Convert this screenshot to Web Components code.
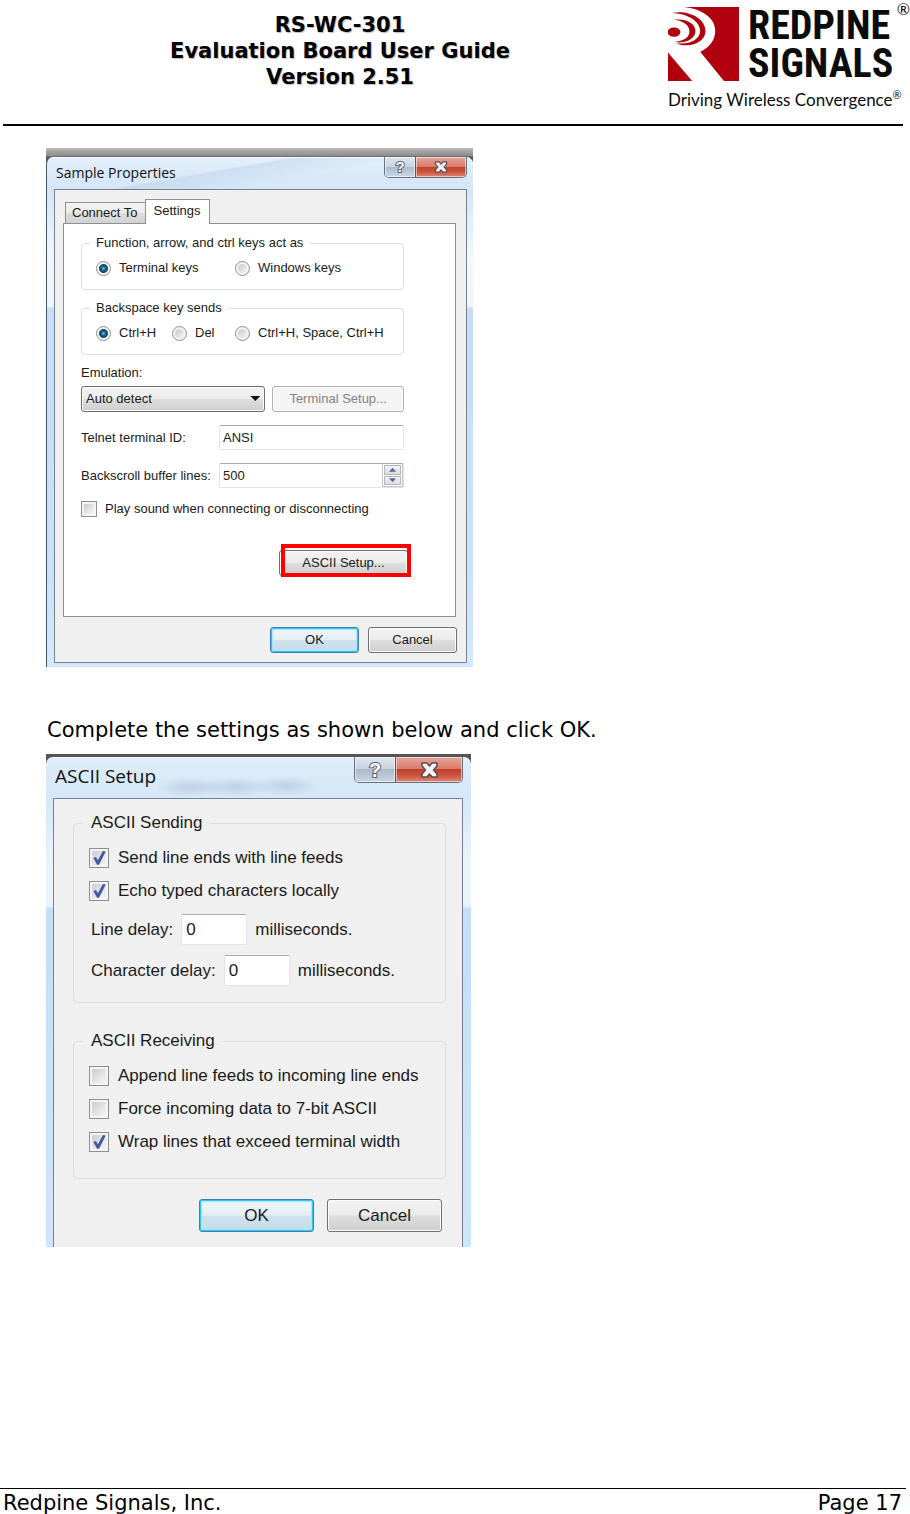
<!DOCTYPE html>
<html lang="en">
<head>
<meta charset="utf-8">
<title>RS-WC-301 Evaluation Board User Guide</title>
<style>
  body {
    margin: 0;
    background: #fff;
    color: #000;
    font-family: "DejaVu Sans", Verdana, sans-serif;
    font-size: 21px;
    line-height: 26px;
  }
  p {
    margin: 50px 0 11px;
    padding-left: 1px;
  }
  .two-up {
    display: grid;
    grid-template-columns: 7fr 5fr;
    align-items: end;
    gap: 7px;
    --button-width: 0;
  }
  .stack {
    display: grid;
    grid-template-columns: minmax(0, 1fr);
    gap: 13px;
  }
  .delays {
    display: grid;
    gap: 10px;
    padding-left: 2px;
  }
  .end {
    display: flex;
    justify-content: flex-end;
    margin: 33px -4px 0 0;
  }
</style>
</head>
<body>
<doc-page>
  <doc-header slot="header">
    RS-WC-301<br>Evaluation Board User Guide<br>Version 2.51
    <brand-logo slot="logo"></brand-logo>
  </doc-header>

  <win-dialog title-text="Sample Properties">
    <tab-panel>
      <group-box legend="Function, arrow, and ctrl keys act as">
        <radio-group name="keys" options="Terminal keys|Windows keys" style="--columns: 139px 1fr"></radio-group>
      </group-box>
      <group-box legend="Backspace key sends">
        <radio-group name="backspace" options="Ctrl+H|Del|Ctrl+H, Space, Ctrl+H" style="--columns: 76px 63px 1fr"></radio-group>
      </group-box>
      <div class="stack">
        <div class="two-up">
          <combo-box label="Emulation:" value="Auto detect"></combo-box>
          <push-button disabled>Terminal Setup...</push-button>
        </div>
        <text-field label="Telnet terminal ID:" value="ANSI"></text-field>
        <text-field label="Backscroll buffer lines:" value="500" stepper></text-field>
        <check-option>Play sound when connecting or disconnecting</check-option>
      </div>
      <div class="end">
        <red-marker><push-button style="--button-width: 129px">ASCII Setup...</push-button></red-marker>
      </div>
    </tab-panel>
    <push-button slot="actions" primary>OK</push-button>
    <push-button slot="actions">Cancel</push-button>
  </win-dialog>

  <p>Complete the settings as shown below and click OK.</p>

  <win-dialog title-text="ASCII Setup" large>
    <group-box legend="ASCII Sending">
      <div class="stack">
        <check-option checked>Send line ends with line feeds</check-option>
        <check-option checked>Echo typed characters locally</check-option>
        <div class="delays">
          <delay-field label="Line delay:" value="0"></delay-field>
          <delay-field label="Character delay:" value="0"></delay-field>
        </div>
      </div>
    </group-box>
    <group-box legend="ASCII Receiving" style="--group-bottom: 26px">
      <div class="stack">
        <check-option>Append line feeds to incoming line ends</check-option>
        <check-option>Force incoming data to 7-bit ASCII</check-option>
        <check-option checked>Wrap lines that exceed terminal width</check-option>
      </div>
    </group-box>
    <push-button slot="actions" primary>OK</push-button>
    <push-button slot="actions">Cancel</push-button>
  </win-dialog>

  <doc-footer slot="footer">Redpine Signals, Inc.<span slot="page">Page 17</span></doc-footer>
</doc-page>

<script>
class DocPage extends HTMLElement {
  constructor() {
    super();
    this.attachShadow({ mode: 'open' }).innerHTML = `
      <style>
        :host { display: flex; flex-direction: column; min-height: 100vh; }
        main { flex: 1; padding: 22px 46px; }
      </style>
      <slot name="header"></slot>
      <main><slot></slot></main>
      <slot name="footer"></slot>
    `;
  }
}

class DocHeader extends HTMLElement {
  constructor() {
    super();
    this.attachShadow({ mode: 'open' }).innerHTML = `
      <style>
        :host { display: block; margin: 0 7px 0 3px; border-bottom: 2px solid #000; }
        header { display: flex; min-height: 124px; }
        h1 {
          flex: 1;
          margin: 0;
          padding: 12px 0 0 9px;
          font-size: 21px;
          line-height: 26px;
          text-align: center;
          text-shadow: 1px 1px 1px #bbb;
        }
      </style>
      <header>
        <h1><slot></slot></h1>
        <slot name="logo"></slot>
      </header>
    `;
  }
}

class BrandLogo extends HTMLElement {
  constructor() {
    super();
    this.attachShadow({ mode: 'open' }).innerHTML = `
      <style>
        :host { display: block; position: relative; width: 235px; padding-top: 7px; color: #0c0c0c; }
        .brand { display: flex; gap: 9px; }
        svg { width: 71px; height: 74px; }
        .name {
          font-family: "Roboto Condensed", Roboto, sans-serif;
          font-weight: 700;
          font-size: 40px;
          line-height: 38px;
        }
        .name span { display: block; }
        .tagline { font-family: Lato, sans-serif; font-size: 17px; line-height: 22px; margin-top: 6px; white-space: nowrap; }
        sup { font-size: 11px; line-height: 0; }
        .mark { position: absolute; top: 0; right: -7px; font-family: Lato, sans-serif; font-size: 16px; line-height: 18px; }
      </style>
      <div class="brand">
        <svg viewBox="12 15 212 221" aria-hidden="true">
          <path fill="#b1000e" d="M12 15H224V236H12Z"/>
          <path fill="#fff" d="M11 14H24C84 10 153 34 153 86C153 116 134 137 108 149L180 237H85L11 150Z"/>
          <path fill="#b1000e" d="M24 33C70 22 124 48 124 86C124 122 76 140 36 123C72 129 108 114 108 87C108 56 68 34 24 33Z"/>
          <path fill="#b1000e" d="M30 53C62 48 94 62 94 87C94 110 64 126 32 119C56 117 76 107 76 88C76 68 56 56 30 53Z"/>
          <ellipse fill="#b1000e" cx="30" cy="90" rx="19" ry="14"/>
        </svg>
        <div class="name"><span>REDPINE</span><span>SIGNALS</span></div>
      </div>
      <div class="tagline">Driving Wireless Convergence<sup>®</sup></div>
      <span class="mark">®</span>
    `;
  }
}

class DocFooter extends HTMLElement {
  constructor() {
    super();
    this.attachShadow({ mode: 'open' }).innerHTML = `
      <style>
        :host { display: block; margin-right: 4px; border-top: 1px solid #000; }
        footer { display: flex; justify-content: space-between; padding: 4px 4px 0 3px; line-height: 21px; }
      </style>
      <footer><span><slot></slot></span><slot name="page"></slot></footer>
    `;
  }
}

class WinDialog extends HTMLElement {
  constructor() {
    super();
    this.attachShadow({ mode: 'open' });
  }

  connectedCallback() {
    this.shadowRoot.innerHTML = `
      <style>
        :host {
          --text: 13px;
          --line: 16px;
          --check: 16px;
          --check-gap: 8px;
          --field: 25px;
          --button-width: 89px;
          --button-height: 26px;
          --group-top: 9px;
          --group-side: 14px;
          --group-bottom: 13px;
          --legend-start: 6px;
          display: block;
          width: 427px;
          max-width: 100%;
          box-sizing: border-box;
          padding-top: 9px;
          background: linear-gradient(#b8b8b8, #8a8a8a 8px, #555 9px, #555 14px, transparent 14px);
          font-family: "Liberation Sans", Arial, sans-serif;
          font-size: var(--text);
          line-height: var(--line);
          color: #1a1a1a;
        }
        :host([large]) {
          --text: 17px;
          --line: 20px;
          --check: 20px;
          --check-gap: 9px;
          --field: 31px;
          --button-width: 115px;
          --button-height: 33px;
          --group-top: 15px;
          --group-side: 15px;
          --group-bottom: 16px;
          --legend-start: 8px;
          width: 425px;
          padding-top: 3px;
          background: linear-gradient(#555, #555 12px, transparent 12px);
        }
        .frame {
          padding: 0 6px 4px 7px;
          border-left: 1px solid #44576a;
          border-radius: 7px 7px 0 0;
          box-shadow: inset 0 1px #f6fbff;
          background:
            linear-gradient(170deg, transparent 40%, #b4cbe466 42%, transparent 60%) 0 0 / 100% 32px no-repeat,
            linear-gradient(#e3effb, #d3e5f7 32px, #f2f7fd 100px, #eef5fd 150px, #c5ddf7 151px, #cbe1f9 80%, #d5e8fb);
        }
        :host([large]) .frame {
          padding: 0 8px 0 7px;
          border-left: 0;
          background:
            radial-gradient(closest-side, #9fb4cc77, transparent) 110px 20px / 70px 20px no-repeat,
            radial-gradient(closest-side, #9fb4cc77, transparent) 155px 20px / 70px 20px no-repeat,
            radial-gradient(closest-side, #9fb4cc77, transparent) 205px 19px / 70px 20px no-repeat,
            linear-gradient(#e0ecf9, #d5e7f8 41px, #eaf3fc 100px, #eaf3fc 150px, #c5ddf7 151px, #cfe5fb);
        }
        .title { display: flex; align-items: flex-start; height: 32px; }
        :host([large]) .title { height: 41px; }
        h2 {
          flex: 1;
          margin: 0;
          padding-left: 2px;
          font: 400 14px/32px "Open Sans", "Noto Sans", sans-serif;
          color: #111;
        }
        :host([large]) h2 { font-size: 19px; line-height: 38px; }
        .caption {
          display: flex;
          border: 1px solid #67727f;
          border-top: 0;
          border-radius: 0 0 5px 5px;
          overflow: hidden;
        }
        button {
          display: flex;
          align-items: center;
          justify-content: center;
          box-sizing: border-box;
          width: 30px;
          height: 20px;
          margin: 0;
          padding: 0;
          border: 0;
          background: linear-gradient(#dde6f0, #c8d3e0 48%, #abb9ca 50%, #cad6e4);
          box-shadow: inset 0 0 0 1px #ffffff88;
        }
        .close {
          width: 51px;
          border-left: 1px solid #7a4a48;
          background: linear-gradient(#e5a79c, #d9796a 48%, #c0412b 50%, #cb5540 75%, #dd8a74);
        }
        :host([large]) button { width: 40px; height: 25px; }
        :host([large]) .close { width: 67px; }
        button span {
          font: 700 15px/18px "Liberation Sans", Arial, sans-serif;
          color: #fff;
          -webkit-text-stroke: 2px #5b6472;
          paint-order: stroke fill;
        }
        svg { width: 14px; height: 12px; }
        :host([large]) button span { font-size: 20px; line-height: 24px; }
        :host([large]) svg { width: 19px; height: 16px; }
        .client {
          padding: 9px 9px 9px 8px;
          border: 1px solid #75818d;
          background: #f0f0f0;
        }
        :host([large]) .client { padding: 14px 16px 15px 19px; border-bottom: 0; }
        :host([large]) .body { display: grid; gap: 28px; }
        .actions { display: flex; justify-content: flex-end; gap: 9px; margin-top: 10px; }
        :host([large]) .actions { gap: 13px; margin: 20px 4px 0 0; }
      </style>
      <div class="frame">
        <div class="title">
          <h2>${this.getAttribute('title-text')}</h2>
          <div class="caption">
            <button type="button" aria-label="Help"><span>?</span></button>
            <button type="button" class="close" aria-label="Close">
              <svg viewBox="0 0 19 16" aria-hidden="true">
                <path d="M2 1H7L9.500 4L12 1H17V4L13.500 8L17 12V15H12L9.500 12L7 15H2V12L5.500 8L2 4Z" fill="#f4f4f4" stroke="#5a4a55" stroke-width="1.500" stroke-linejoin="round"/>
              </svg>
            </button>
          </div>
        </div>
        <div class="client">
          <div class="body"><slot></slot></div>
          <div class="actions"><slot name="actions"></slot></div>
        </div>
      </div>
    `;
  }
}

class TabPanel extends HTMLElement {
  constructor() {
    super();
    this.attachShadow({ mode: 'open' }).innerHTML = `
      <style>
        :host { display: block; }
        .tabs { display: flex; align-items: flex-end; height: 24px; padding-left: 2px; }
        button {
          height: 21px;
          margin: 0;
          padding: 0 7px 0 6px;
          border: 1px solid #8d9096;
          border-bottom: 0;
          background: linear-gradient(#f3f3f3, #ebebeb 48%, #dddddd 52%, #d2d2d2);
          font: inherit;
          color: inherit;
        }
        button[aria-selected=true] {
          position: relative;
          height: 25px;
          margin: 0 0 -1px -1px;
          padding: 0 8px 2px;
          background: #fff;
        }
        .panel {
          margin-right: 1px;
          padding: 11px 51px 40px 17px;
          border: 1px solid #8d9096;
          background: #fff;
        }
        ::slotted(group-box) { margin-bottom: 10px; }
      </style>
      <div class="tabs" role="tablist">
        <button type="button" role="tab" aria-selected="false">Connect To</button>
        <button type="button" role="tab" aria-selected="true">Settings</button>
      </div>
      <div class="panel" role="tabpanel"><slot></slot></div>
    `;
  }
}

class GroupBox extends HTMLElement {
  constructor() {
    super();
    this.attachShadow({ mode: 'open' });
  }

  connectedCallback() {
    this.shadowRoot.innerHTML = `
      <style>
        :host { display: block; }
        fieldset {
          min-width: 0;
          margin: 0;
          padding: var(--group-top) var(--group-side) var(--group-bottom);
          border: 1px solid #d5dfe5;
          border-radius: 4px;
        }
        legend { margin-left: -6px; padding: 0 7px 0 var(--legend-start); }
      </style>
      <fieldset>
        <legend>${this.getAttribute('legend')}</legend>
        <slot></slot>
      </fieldset>
    `;
  }
}

class RadioGroup extends HTMLElement {
  constructor() {
    super();
    this.attachShadow({ mode: 'open' });
  }

  connectedCallback() {
    const name = this.getAttribute('name');
    const options = this.getAttribute('options').split('|');
    this.shadowRoot.innerHTML = `
      <style>
        :host { display: grid; grid-template-columns: var(--columns); }
        label { display: flex; align-items: center; gap: 8px; white-space: nowrap; }
        input {
          appearance: none;
          flex: none;
          box-sizing: border-box;
          width: 15px;
          height: 15px;
          margin: 0;
          padding: 2px;
          border: 1px solid #8e8f8f;
          border-radius: 50%;
          background: linear-gradient(135deg, #c6cacd, #f4f4f4) content-box, #f4f4f4;
        }
        input:checked {
          background: radial-gradient(circle at 50% 50%, #5ec4ea, #1d6796 2px, #14415f 4px, #f4f4f4 5px);
        }
      </style>
      ${options.map((text, i) => `
        <label><input type="radio" name="${name}" ${i === 0 ? 'checked' : ''}>${text}</label>
      `).join('')}
    `;
  }
}

class CheckOption extends HTMLElement {
  constructor() {
    super();
    this.attachShadow({ mode: 'open' });
  }

  connectedCallback() {
    this.shadowRoot.innerHTML = `
      <style>
        :host { display: block; }
        label { display: flex; align-items: center; gap: var(--check-gap); white-space: nowrap; }
        input {
          appearance: none;
          flex: none;
          display: grid;
          box-sizing: border-box;
          width: var(--check);
          height: var(--check);
          margin: 0;
          padding: 2px;
          border: 1px solid #8e8f8f;
          background: linear-gradient(135deg, #c9ced3, #f6f6f6) content-box, #f4f4f4;
        }
        input:checked::before {
          content: "";
          background: #44599c;
          clip-path: polygon(10% 50%, 28% 42%, 42% 66%, 78% 0, 98% 4%, 50% 98%, 36% 98%);
        }
      </style>
      <label><input type="checkbox" ${this.hasAttribute('checked') ? 'checked' : ''}><span><slot></slot></span></label>
    `;
  }
}

class PushButton extends HTMLElement {
  constructor() {
    super();
    this.attachShadow({ mode: 'open' });
  }

  connectedCallback() {
    this.shadowRoot.innerHTML = `
      <style>
        :host { display: block; min-width: var(--button-width); }
        button {
          display: block;
          box-sizing: border-box;
          width: 100%;
          height: var(--button-height);
          margin: 0;
          padding: 0;
          border: 1px solid #707070;
          border-radius: 3px;
          background: linear-gradient(#f3f3f3, #ebebeb 48%, #dddddd 52%, #cfcfcf);
          box-shadow: inset 0 0 0 1px #fbfbfb;
          font: inherit;
          color: inherit;
        }
        :host([primary]) button {
          border-color: #3c7fb1;
          background: linear-gradient(#f0f6f9, #e6eff4 48%, #d0e2ec 52%, #c3dbe8);
          box-shadow: inset 0 0 0 1px #33c4f1, inset 0 0 1px 2px #a5e5fa;
        }
        button:disabled {
          border-color: #adb2b5;
          background: #f4f4f4;
          color: #838383;
        }
      </style>
      <button type="button" ${this.hasAttribute('disabled') ? 'disabled' : ''}><slot></slot></button>
    `;
  }
}

class ComboBox extends HTMLElement {
  constructor() {
    super();
    this.attachShadow({ mode: 'open' });
  }

  connectedCallback() {
    this.shadowRoot.innerHTML = `
      <style>
        :host { display: block; }
        label { display: block; margin-bottom: 5px; }
        .box { position: relative; }
        .box::after {
          content: "";
          position: absolute;
          top: 10px;
          right: 5px;
          width: 10px;
          height: 5px;
          background: #111;
          clip-path: polygon(0 0, 100% 0, 50% 100%);
          pointer-events: none;
        }
        select {
          appearance: none;
          display: block;
          box-sizing: border-box;
          width: 100%;
          height: 26px;
          margin: 0;
          padding: 0 20px 0 4px;
          border: 1px solid #707070;
          border-radius: 3px;
          background: linear-gradient(#f3f3f3, #ebebeb 48%, #dddddd 52%, #cfcfcf);
          box-shadow: inset 0 0 0 1px #fbfbfb;
          font: inherit;
          color: inherit;
        }
      </style>
      <label for="combo">${this.getAttribute('label')}</label>
      <div class="box"><select id="combo"><option>${this.getAttribute('value')}</option></select></div>
    `;
  }
}

class TextField extends HTMLElement {
  constructor() {
    super();
    this.attachShadow({ mode: 'open' });
  }

  connectedCallback() {
    const stepper = this.hasAttribute('stepper');
    this.shadowRoot.innerHTML = `
      <style>
        :host { display: grid; grid-template-columns: 138px minmax(0, 1fr); align-items: center; }
        label { white-space: nowrap; }
        .box {
          display: flex;
          box-sizing: border-box;
          height: var(--field);
          border: 1px solid #dfe5ec;
          border-top-color: #a9abb3;
          border-radius: 2px;
          background: #fff;
        }
        input {
          appearance: textfield;
          flex: 1;
          min-width: 0;
          margin: 0;
          padding: 0 3px;
          border: 0;
          background: none;
          font: inherit;
          color: inherit;
        }
        input::-webkit-inner-spin-button { display: none; }
        .steps { display: grid; width: 17px; padding: 1px; gap: 1px; border: 1px solid #c3c7cc; border-top: 0; }
        .steps button {
          display: grid;
          place-items: center;
          min-height: 0;
          margin: 0;
          padding: 0;
          border: 1px solid #b5b9be;
          background: linear-gradient(#f3f3f3, #dcdcdc);
        }
        i { width: 7px; height: 4px; background: #5169a8; clip-path: polygon(50% 0, 100% 100%, 0 100%); }
        .down i { clip-path: polygon(0 0, 100% 0, 50% 100%); }
      </style>
      <label for="field">${this.getAttribute('label')}</label>
      <div class="box">
        <input id="field" type="${stepper ? 'number' : 'text'}" value="${this.getAttribute('value')}">
        ${stepper ? `
          <div class="steps">
            <button type="button" aria-label="Increase"><i></i></button>
            <button type="button" class="down" aria-label="Decrease"><i></i></button>
          </div>
        ` : ''}
      </div>
    `;
  }
}

class DelayField extends HTMLElement {
  constructor() {
    super();
    this.attachShadow({ mode: 'open' });
  }

  connectedCallback() {
    this.shadowRoot.innerHTML = `
      <style>
        :host { display: flex; align-items: center; gap: 8px; white-space: nowrap; }
        input {
          box-sizing: border-box;
          width: 66px;
          height: var(--field);
          margin: 0;
          padding: 0 4px;
          border: 1px solid #dfe5ec;
          border-top-color: #a9abb3;
          border-radius: 2px;
          background: #fff;
          font: inherit;
          color: inherit;
        }
      </style>
      <label for="delay">${this.getAttribute('label')}</label>
      <input id="delay" type="text" value="${this.getAttribute('value')}">
      <span>milliseconds.</span>
    `;
  }
}

// Red rectangle drawn over the control it holds
class RedMarker extends HTMLElement {
  constructor() {
    super();
    this.attachShadow({ mode: 'open' }).innerHTML = `
      <style>
        :host { display: block; position: relative; }
        :host::after {
          content: "";
          position: absolute;
          inset: -6px -3px -1px 2px;
          border: 4px solid #f00;
          pointer-events: none;
        }
      </style>
      <slot></slot>
    `;
  }
}

customElements.define('doc-page', DocPage);
customElements.define('doc-header', DocHeader);
customElements.define('brand-logo', BrandLogo);
customElements.define('doc-footer', DocFooter);
customElements.define('win-dialog', WinDialog);
customElements.define('tab-panel', TabPanel);
customElements.define('group-box', GroupBox);
customElements.define('radio-group', RadioGroup);
customElements.define('check-option', CheckOption);
customElements.define('push-button', PushButton);
customElements.define('combo-box', ComboBox);
customElements.define('text-field', TextField);
customElements.define('delay-field', DelayField);
customElements.define('red-marker', RedMarker);
</script>
</body>
</html>
